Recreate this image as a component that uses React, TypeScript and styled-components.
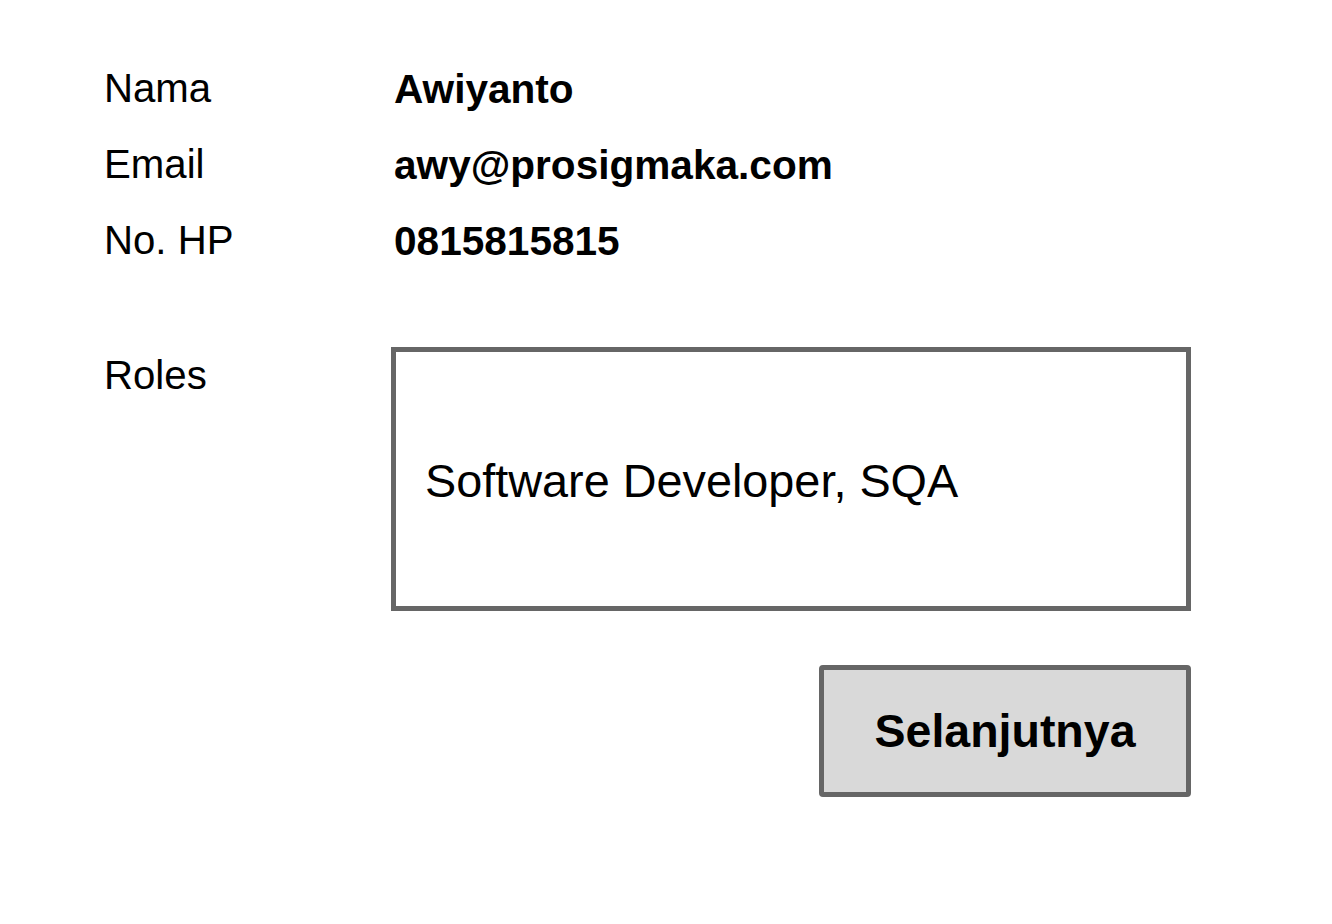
import React from "react";
import styled, { createGlobalStyle } from "styled-components";

const GlobalStyle = createGlobalStyle`
  html, body {
    margin: 0;
    padding: 0;
    background: #ffffff;
  }
  body {
    font-family: "Liberation Sans", Arial, sans-serif;
    color: #000000;
  }
`;

const Page = styled.div`
  padding: 51px 0 0 104px;
  width: 1332px;
  height: 924px;
  box-sizing: border-box;
`;

const InfoGrid = styled.div`
  display: grid;
  grid-template-columns: 287px 800px;
  grid-auto-rows: 76px;
  align-items: center;
`;

const Label = styled.div`
  font-size: 40.2px;
  line-height: 76px;
  font-weight: 400;
`;

const Value = styled.div`
  font-size: 40.6px;
  line-height: 76px;
  font-weight: 700;
  padding-left: 3px;
`;

const RolesRow = styled.div`
  display: grid;
  grid-template-columns: 287px 800px;
  margin-top: 68px;
  align-items: start;
`;

const RolesLabel = styled.div`
  font-size: 40.2px;
  line-height: 58px;
`;

const RolesBox = styled.div`
  box-sizing: border-box;
  width: 800px;
  height: 264px;
  border: 5px solid #666666;
  display: flex;
  align-items: center;
  padding: 4px 0 0 29px;
  font-size: 46.8px;
`;

const Actions = styled.div`
  display: flex;
  justify-content: flex-end;
  width: 1087px;
  margin-top: 54px;
`;

const NextButton = styled.button`
  box-sizing: border-box;
  width: 372px;
  height: 132px;
  border: 5px solid #666666;
  border-radius: 4px;
  background: #d9d9d9;
  font-family: "Liberation Sans", Arial, sans-serif;
  font-size: 46.5px;
  font-weight: 700;
  color: #000000;
  padding: 0 0 0 0;
  cursor: pointer;
`;

const rows: [string, string][] = [
  ["Nama", "Awiyanto"],
  ["Email", "awy@prosigmaka.com"],
  ["No. HP", "0815815815"],
];

export default function App() {
  return (
    <>
      <GlobalStyle />
      <Page>
        <InfoGrid>
          {rows.map(([label, value]) => (
            <React.Fragment key={label}>
              <Label>{label}</Label>
              <Value>{value}</Value>
            </React.Fragment>
          ))}
        </InfoGrid>
        <RolesRow>
          <RolesLabel>Roles</RolesLabel>
          <RolesBox>Software Developer, SQA</RolesBox>
        </RolesRow>
        <Actions>
          <NextButton>Selanjutnya</NextButton>
        </Actions>
      </Page>
    </>
  );
}
